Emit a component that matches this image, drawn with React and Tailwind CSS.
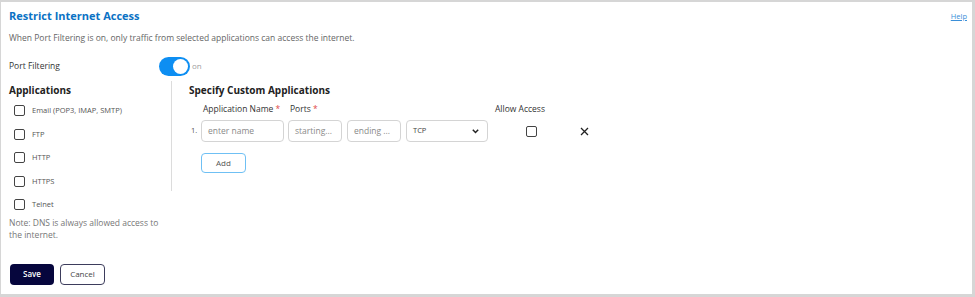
import React from 'react';

const apps = ['Email (POP3, IMAP, SMTP)', 'FTP', 'HTTP', 'HTTPS', 'Telnet'];

const Box = ({ className = '' }) => (
  <span className={`block h-[11px] w-[11px] rounded-[2px] border border-[#444] bg-white ${className}`} />
);

export default function App() {
  return (
    <div className="h-[297px] w-[975px] bg-[#d6d6d6] pb-[3px] pl-[1px] pr-[3px] pt-[2px] font-['Open_Sans',sans-serif]">
      <div className="flex h-full flex-col bg-white pl-[8px] pr-[5px]">
        <div className="mt-[6px] flex h-[16px] items-center justify-between">
          <h1 className="text-[11px] font-bold leading-[16px] text-[#0b72c4]">Restrict Internet Access</h1>
          <a className="text-[7.5px] leading-[16px] text-[#3b8fd8] underline">Help</a>
        </div>
        <p className="mt-[8px] text-[8.5px] leading-[12px] text-[#666]">
          When Port Filtering is on, only traffic from selected applications can access the internet.
        </p>
        <div className="mt-[12px] flex h-[20px] items-center">
          <span className="w-[150px] text-[8.5px] text-[#333]">Port Filtering</span>
          <span className="flex h-[19px] w-[31px] items-center justify-end rounded-full bg-[#0d8ef2] pr-[2px]">
            <span className="h-[15px] w-[15px] rounded-full bg-white" />
          </span>
          <span className="ml-[2px] text-[8px] text-[#a0a0a0]">on</span>
        </div>

        <div className="mt-[5px] flex items-start">
          <div className="w-[162px]">
            <div className="flex h-[18px] items-center text-[10px] font-bold text-[#222]">Applications</div>
            {apps.map((a) => (
              <div key={a} className="flex h-[23.5px] items-center pl-[5px]">
                <Box />
                <span className="ml-[7px] text-[7.5px] font-normal text-[#555]">{a}</span>
              </div>
            ))}
            <p className="text-[8.5px] leading-[12px] text-[#777]">
              Note: DNS is always allowed access to
              <br />
              the internet.
            </p>
          </div>

          <div className="border-l border-[#dcdcdc] pb-[18px] pl-[17px]">
            <div className="flex h-[18px] items-center text-[10px] font-bold text-[#222]">Specify Custom Applications</div>
            <div className="mt-[4px] flex h-[12px] items-center text-[8.5px] text-[#333]">
              <span className="w-[101px] pl-[14px]">
                Application Name <span className="text-[#e04848]">*</span>
              </span>
              <span className="w-[205px]">
                Ports <span className="text-[#e04848]">*</span>
              </span>
              <span>Allow Access</span>
            </div>
            <div className="mt-[5px] flex h-[22px] items-center text-[8.5px]">
              <span className="w-[12px] pl-[2px] text-[7.5px] text-[#555]">1.</span>
              <div className="flex h-[22px] w-[83px] items-center rounded-[4px] border border-[#d4d4d4] pl-[6px] text-[#8a8a8a]">enter name</div>
              <div className="ml-[4px] flex h-[22px] w-[54px] items-center rounded-[4px] border border-[#d4d4d4] pl-[6px] text-[#8a8a8a]">starting...</div>
              <div className="ml-[5px] flex h-[22px] w-[54px] items-center rounded-[4px] border border-[#d4d4d4] pl-[6px] text-[#8a8a8a]">ending ...</div>
              <div className="ml-[5px] flex h-[22px] w-[82px] items-center justify-between rounded-[4px] border border-[#d4d4d4] pl-[6px] pr-[8px] text-[7.5px] text-[#444]">
                <span>TCP</span>
                <svg width="7" height="5" viewBox="0 0 7 5">
                  <path d="M0.8 0.8l2.7 2.7L6.2 0.8" fill="none" stroke="#222" strokeWidth="1.5" />
                </svg>
              </div>
              <Box className="ml-[38px]" />
              <svg className="ml-[43px]" width="9" height="9" viewBox="0 0 9 9">
                <path d="M1 1l7 7M8 1L1 8" stroke="#222" strokeWidth="1.3" />
              </svg>
            </div>
            <button className="ml-[12px] mt-[11px] flex h-[20px] w-[45px] items-center justify-center rounded-[4px] border-[1.5px] border-[#6fc0f4] text-[8px] text-[#555]">
              Add
            </button>
          </div>
        </div>

        <div className="mt-[23px] flex gap-[6px] pl-[1px]">
          <button className="flex h-[21px] w-[44px] items-center justify-center rounded-[4px] bg-[#06063d] text-[8px] font-semibold text-white">
            Save
          </button>
          <button className="flex h-[21px] w-[45px] items-center justify-center rounded-[4px] border border-[#3d3d5c] text-[8px] text-[#444]">
            Cancel
          </button>
        </div>
      </div>
    </div>
  );
}
